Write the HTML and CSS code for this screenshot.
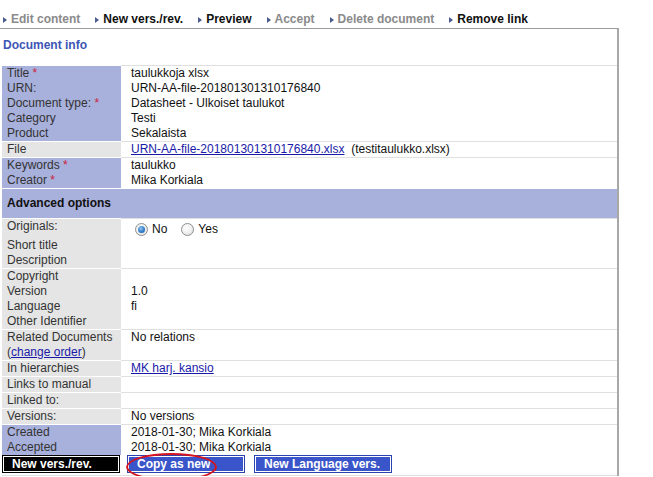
FILE: index.html
```html
<!DOCTYPE html>
<html>
<head>
<meta charset="utf-8">
<link rel="stylesheet" href="styles.css">
</head>
<body>
<div class="menu">
  <span class="mi off"><i class="tri"></i>Edit content</span>
  <span class="mi"><i class="tri"></i>New vers./rev.</span>
  <span class="mi"><i class="tri"></i>Preview</span>
  <span class="mi off"><i class="tri"></i>Accept</span>
  <span class="mi off"><i class="tri"></i>Delete document</span>
  <span class="mi"><i class="tri"></i>Remove link</span>
</div>
<div class="box">
  <div class="doc-title">Document info</div>
  <div class="tbl">
    <div class="row purple">
      <div class="lbl">Title <span class="req">*</span><br>URN:<br>Document type: <span class="req">*</span><br>Category<br>Product</div>
      <div class="val">taulukkoja xlsx<br>URN-AA-file-201801301310176840<br>Datasheet - Ulkoiset taulukot<br>Testi<br>Sekalaista</div>
    </div>
    <div class="row gray">
      <div class="lbl">File</div>
      <div class="val"><a href="#">URN-AA-file-201801301310176840.xlsx</a>&nbsp; (testitaulukko.xlsx)</div>
    </div>
    <div class="row purple">
      <div class="lbl">Keywords <span class="req">*</span><br>Creator <span class="req">*</span></div>
      <div class="val">taulukko<br>Mika Korkiala</div>
    </div>
    <div class="section">Advanced options</div>
    <div class="row gray">
      <div class="lbl"><div class="tall">Originals:</div>Short title<br>Description</div>
      <div class="val"><div class="tall radios"><span class="radio checked"></span>No<span class="radio"></span>Yes</div><br><br></div>
    </div>
    <div class="row gray">
      <div class="lbl">Copyright<br>Version<br>Language<br>Other Identifier</div>
      <div class="val"><br>1.0<br>fi<br></div>
    </div>
    <div class="row gray">
      <div class="lbl">Related Documents<br>(<a href="#">change order</a>)</div>
      <div class="val">No relations<br></div>
    </div>
    <div class="row gray">
      <div class="lbl">In hierarchies</div>
      <div class="val"><a href="#">MK harj. kansio</a></div>
    </div>
    <div class="row gray">
      <div class="lbl">Links to manual</div>
      <div class="val"></div>
    </div>
    <div class="row gray">
      <div class="lbl">Linked to:</div>
      <div class="val"></div>
    </div>
    <div class="row gray">
      <div class="lbl">Versions:</div>
      <div class="val">No versions</div>
    </div>
    <div class="row purple">
      <div class="lbl">Created<br>Accepted</div>
      <div class="val">2018-01-30; Mika Korkiala<br>2018-01-30; Mika Korkiala</div>
    </div>
    <div class="buttons">
      <span class="btn black">New vers./rev.</span>
      <span class="btn blue copy">Copy as new<span class="ring"></span></span>
      <span class="btn blue wide">New Language vers.</span>
    </div>
  </div>
</div>
</body>
</html>
```
FILE: styles.css
```css
html, body {
  margin: 0;
  padding: 0;
  background: #fff;
}
body {
  font-family: "Liberation Sans", Arial, sans-serif;
  font-size: 12px;
  line-height: 15px;
  color: #111;
}
.menu {
  display: flex;
  gap: 15px;
  padding: 11px 0 0 3px;
  height: 17px;
  font-weight: bold;
  color: #111;
}
.mi {
  display: inline-flex;
  align-items: center;
  white-space: nowrap;
}
.mi.off {
  color: #8a8a8a;
}
.tri {
  display: inline-block;
  width: 0;
  height: 0;
  border-left: 4px solid #4b5b8e;
  border-top: 3.5px solid transparent;
  border-bottom: 3.5px solid transparent;
  margin-right: 4px;
  margin-top: 1px;
}
.box {
  box-sizing: border-box;
  width: 619px;
  border-top: 1px solid #9a9a9a;
  border-right: 2px solid #a8a8a8;
}
.doc-title {
  padding: 9px 3px 0 3px;
  height: 15px;
  font-weight: bold;
  color: #3d55b5;
  margin-bottom: 12px;
}
.tbl {
  margin-left: 2px;
  width: 615px;
}
.row {
  display: grid;
  grid-template-columns: 119px 1fr;
}
.lbl {
  border-top: 1px solid #fff;
  padding-left: 5px;
  color: #333;
  white-space: nowrap;
}
.purple .lbl {
  background: #a8b0dc;
}
.gray .lbl {
  background: #e5e5e5;
}
.val {
  border-top: 1px solid #e0e0e0;
  padding-left: 10px;
  min-height: 15px;
  white-space: nowrap;
}
.req {
  color: #cc1f3a;
}
a {
  color: #1a1aa8;
  text-decoration: underline;
}
.section {
  margin-top: 1px;
  height: 29px;
  line-height: 29px;
  background: #a8b0dc;
  font-weight: bold;
  padding-left: 5px;
  color: #111;
}
.tall {
  height: 19px;
}
.radios {
  display: flex;
  align-items: center;
  padding-top: 2px;
  height: 17px;
}
.radio {
  display: inline-block;
  box-sizing: border-box;
  width: 13px;
  height: 13px;
  border-radius: 50%;
  border: 1px solid #8e8f8f;
  background: radial-gradient(circle at 40% 35%, #fff 0%, #f0f0f0 50%, #d8d8d8 100%);
  margin: 0 4px 0 4px;
  position: relative;
}
.radios .radio:nth-of-type(2) {
  margin-left: 14px;
}
.radio.checked::after {
  content: "";
  position: absolute;
  left: 2px;
  top: 2px;
  width: 7px;
  height: 7px;
  border-radius: 50%;
  background: radial-gradient(circle at 40% 35%, #8ec4ef 0%, #2f78c6 60%, #1b4f92 100%);
}
.buttons {
  display: flex;
  padding: 0 0 0 1px;
  height: 21px;
  box-sizing: border-box;
  border-bottom: 1px solid #e0e0e0;
}
.btn {
  display: inline-block;
  box-sizing: border-box;
  height: 16px;
  line-height: 14px;
  border: 1px solid #fff;
  color: #fff;
  font-weight: bold;
  padding-left: 8px;
  margin-top: 1px;
  white-space: nowrap;
}
.btn.black {
  background: #000;
  box-shadow: 0 0 0 1px #000;
  width: 116px;
}
.btn.blue {
  background: #3a55c9;
  box-shadow: 0 0 0 1px #2b43b0;
}
.copy {
  width: 116px;
  margin-left: 9px;
  position: relative;
}
.wide {
  width: 136px;
  margin-left: 11px;
}
.ring {
  position: absolute;
  left: -3px;
  top: -4px;
  width: 87px;
  height: 24px;
  border: 2px solid #d4141f;
  border-radius: 50%;
}
```
